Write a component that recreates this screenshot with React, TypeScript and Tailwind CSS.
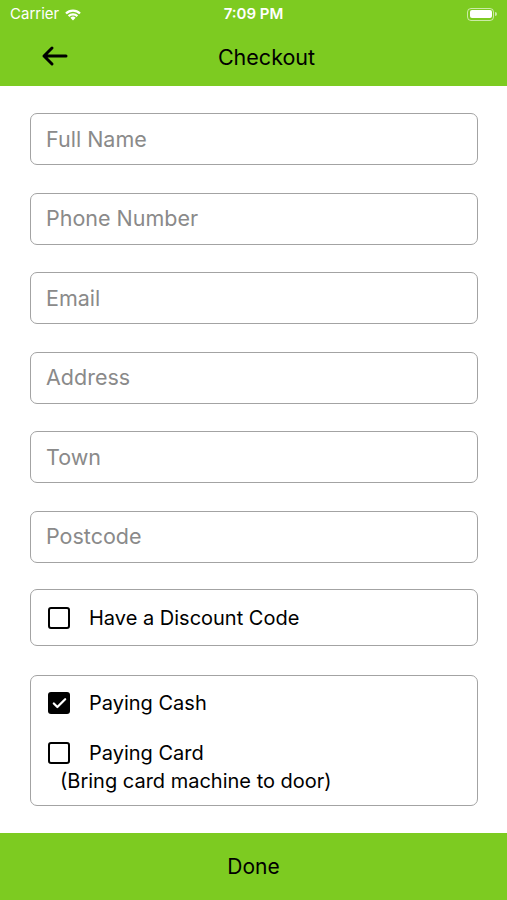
import { Check } from "lucide-react";

const GREEN = "bg-[#7dcb21]";

const fields = ["Full Name", "Phone Number", "Email", "Address", "Town", "Postcode"];

function Box({ checked }: { checked?: boolean }) {
  return checked ? (
    <span className="flex h-[22px] w-[22px] items-center justify-center rounded-[3px] bg-black">
      <Check size={17} strokeWidth={3.2} className="text-white" />
    </span>
  ) : (
    <span className="block h-[22px] w-[22px] rounded-[3px] border-[2.5px] border-black" />
  );
}

function StatusBar() {
  return (
    <div className="relative flex h-[28px] items-center px-[10px] text-[15px] text-white">
      <div className="flex items-center gap-[5px]">
        <span>Carrier</span>
        <svg width="18" height="13" viewBox="0 0 18 13" fill="white">
          <path d="M9 12.5 6.4 9.8a3.7 3.7 0 0 1 5.2 0Z" />
          <path d="M3.8 7.3a7.4 7.4 0 0 1 10.4 0l-1.6 1.6a5.2 5.2 0 0 0-7.2 0Z" />
          <path d="M1.2 4.7a11 11 0 0 1 15.6 0l-1.6 1.6a8.8 8.8 0 0 0-12.4 0Z" />
        </svg>
      </div>
      <span className="absolute left-1/2 -translate-x-1/2 font-semibold">7:09 PM</span>
      <div className="ml-auto flex items-center gap-[1px]">
        <span className="flex h-[13px] w-[27px] items-center rounded-[4px] border border-white/60 p-[1.5px]">
          <span className="h-full w-full rounded-[2px] bg-white" />
        </span>
        <span className="h-[4px] w-[2px] rounded-r-sm bg-white/60" />
      </div>
    </div>
  );
}

export default function App() {
  return (
    <div
      className="flex h-[900px] w-[507px] flex-col bg-white"
      style={{ fontFamily: "Inter, 'Liberation Sans', sans-serif" }}
    >
      <header className={`${GREEN}`}>
        <StatusBar />
        <div className="relative flex h-[58px] items-center justify-center pl-[26px]">
          <svg
            className="absolute left-[41px] top-[17px]"
            width="27"
            height="22"
            viewBox="0 0 27 22"
            fill="none"
            stroke="black"
            strokeWidth="3"
            strokeLinecap="round"
            strokeLinejoin="round"
          >
            <path d="M25 11H3M11 3 3 11l8 8" />
          </svg>
          <h1 className="text-[21.5px] text-black">Checkout</h1>
        </div>
      </header>

      <main className="flex flex-1 flex-col pl-[30px] pr-[29px] pt-[27px]">
        <div className="flex flex-col gap-[27.5px]">
          {fields.map((f) => (
            <div
              key={f}
              className="flex h-[52px] items-center rounded-[7px] border-[1.5px] border-[#a3a3a3] px-[15px] text-[21.5px] text-[#8a8a8a]"
            >
              {f}
            </div>
          ))}
        </div>

        <div className="mt-[26.5px] flex h-[57px] items-center gap-[19px] rounded-[7px] border-[1.5px] border-[#a3a3a3] px-[17px] text-[20px] text-black">
          <Box />
          <span>Have a Discount Code</span>
        </div>

        <div className="mt-[29px] flex h-[131px] flex-col rounded-[7px] border-[1.5px] border-[#a3a3a3] px-[17px] pt-[12px] text-[20px] text-black">
          <div className="flex items-center gap-[19px]">
            <Box checked />
            <span>Paying Cash</span>
          </div>
          <div className="mt-[20px] flex items-center gap-[19px]">
            <Box />
            <span>Paying Card</span>
          </div>
          <span className="ml-[12px] leading-[26px]">(Bring card machine to door)</span>
        </div>
      </main>

      <footer className={`${GREEN} flex h-[67px] items-center justify-center text-[21px] text-black`}>
        Done
      </footer>
    </div>
  );
}
